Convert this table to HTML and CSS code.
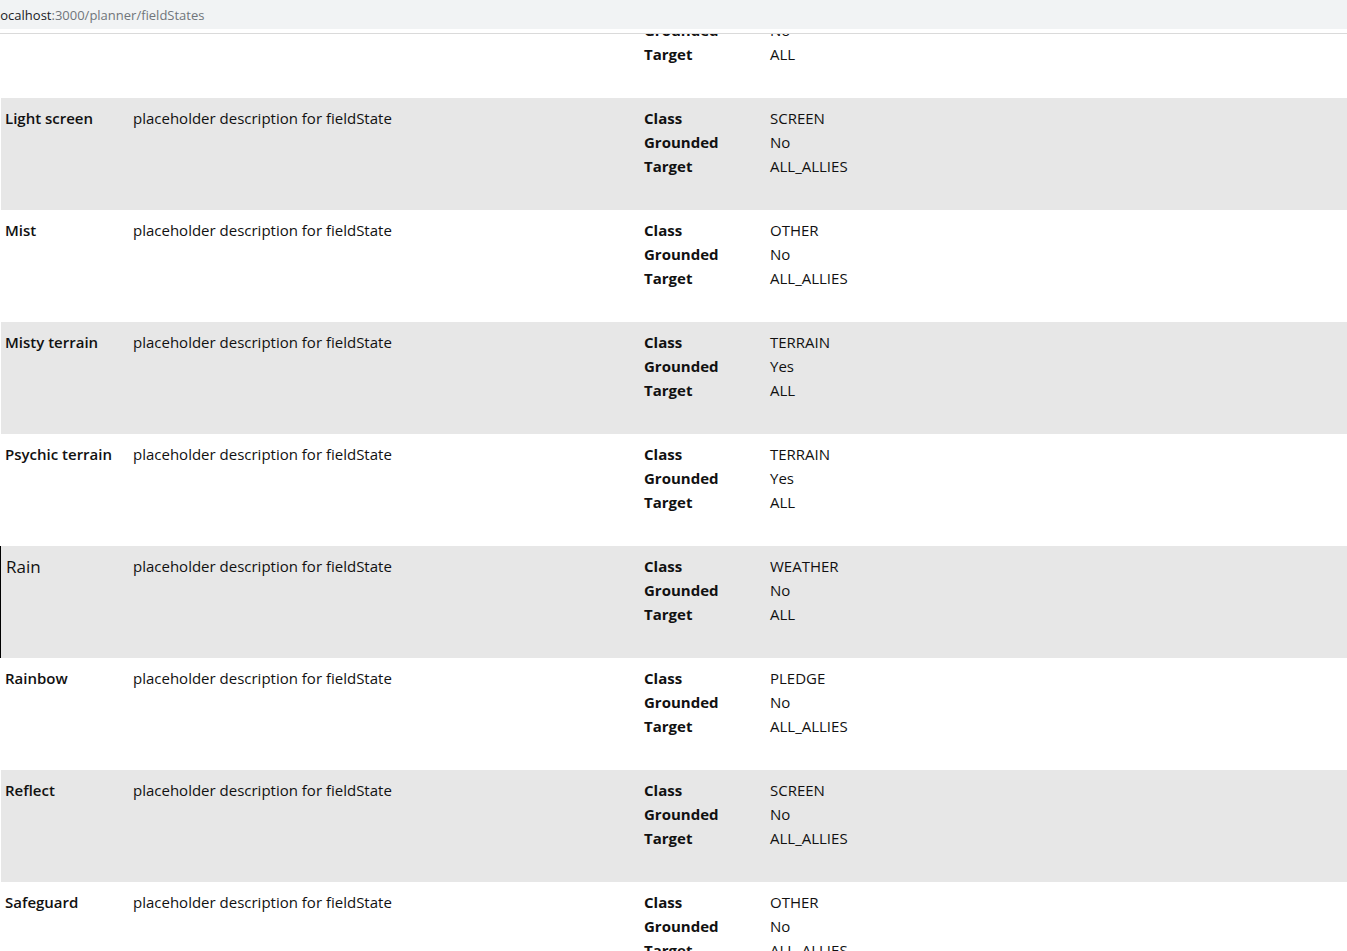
FILE: index.html
```html
<!DOCTYPE html>
<html lang="en">
<head>
<meta charset="utf-8">
<title>fieldStates</title>
<link rel="stylesheet" href="styles.css">
</head>
<body>
<div class="urlbar"><span class="url"><span class="host">localhost</span>:3000/planner/fieldStates</span></div>
<div class="viewport">
<div class="list">
  <div class="row">
    <div class="name">Hail</div>
    <div class="desc">placeholder description for fieldState</div>
    <div class="props"><span class="k">Class</span><span class="v">WEATHER</span><span class="k">Grounded</span><span class="v">No</span><span class="k">Target</span><span class="v">ALL</span></div>
  </div>
  <div class="row alt">
    <div class="name">Light screen</div>
    <div class="desc">placeholder description for fieldState</div>
    <div class="props"><span class="k">Class</span><span class="v">SCREEN</span><span class="k">Grounded</span><span class="v">No</span><span class="k">Target</span><span class="v">ALL_ALLIES</span></div>
  </div>
  <div class="row">
    <div class="name">Mist</div>
    <div class="desc">placeholder description for fieldState</div>
    <div class="props"><span class="k">Class</span><span class="v">OTHER</span><span class="k">Grounded</span><span class="v">No</span><span class="k">Target</span><span class="v">ALL_ALLIES</span></div>
  </div>
  <div class="row alt">
    <div class="name">Misty terrain</div>
    <div class="desc">placeholder description for fieldState</div>
    <div class="props"><span class="k">Class</span><span class="v">TERRAIN</span><span class="k">Grounded</span><span class="v">Yes</span><span class="k">Target</span><span class="v">ALL</span></div>
  </div>
  <div class="row">
    <div class="name">Psychic terrain</div>
    <div class="desc">placeholder description for fieldState</div>
    <div class="props"><span class="k">Class</span><span class="v">TERRAIN</span><span class="k">Grounded</span><span class="v">Yes</span><span class="k">Target</span><span class="v">ALL</span></div>
  </div>
  <div class="row alt active">
    <div class="name">Rain</div>
    <div class="desc">placeholder description for fieldState</div>
    <div class="props"><span class="k">Class</span><span class="v">WEATHER</span><span class="k">Grounded</span><span class="v">No</span><span class="k">Target</span><span class="v">ALL</span></div>
  </div>
  <div class="row">
    <div class="name">Rainbow</div>
    <div class="desc">placeholder description for fieldState</div>
    <div class="props"><span class="k">Class</span><span class="v">PLEDGE</span><span class="k">Grounded</span><span class="v">No</span><span class="k">Target</span><span class="v">ALL_ALLIES</span></div>
  </div>
  <div class="row alt">
    <div class="name">Reflect</div>
    <div class="desc">placeholder description for fieldState</div>
    <div class="props"><span class="k">Class</span><span class="v">SCREEN</span><span class="k">Grounded</span><span class="v">No</span><span class="k">Target</span><span class="v">ALL_ALLIES</span></div>
  </div>
  <div class="row">
    <div class="name">Safeguard</div>
    <div class="desc">placeholder description for fieldState</div>
    <div class="props"><span class="k">Class</span><span class="v">OTHER</span><span class="k">Grounded</span><span class="v">No</span><span class="k">Target</span><span class="v">ALL_ALLIES</span></div>
  </div>
</div>
</div>
</body>
</html>
```

FILE: styles.css
```css
html, body {
  margin: 0;
  padding: 0;
  background: #fff;
  overflow: hidden;
}
body {
  font-family: "Open Sans", "Noto Sans", "Liberation Sans", sans-serif;
  font-size: 15px;
  color: #111;
  height: 951px;
  display: flex;
  flex-direction: column;
}
.urlbar {
  flex: none;
  height: 34px;
  background: #fff;
  border-bottom: 1px solid #dadada;
  box-sizing: border-box;
  overflow: hidden;
}
.url {
  display: block;
  height: 29px;
  background: #f1f3f4;
  line-height: 30px;
  font-size: 13px;
  color: #70757a;
  margin-left: -3px;
  white-space: nowrap;
}
.host {
  color: #202124;
}
.viewport {
  flex: 1;
  overflow: hidden;
}
.list {
  margin-top: -48px;
}
.row {
  display: grid;
  grid-template-columns: 128px 511px 126px;
  height: 112px;
  box-sizing: border-box;
  padding-top: 8px;
  border-left: 1px solid #fff;
  line-height: 24px;
}
.row.alt {
  background: #e7e7e7;
}
.row > div {
  padding-left: 4px;
}
.name {
  font-weight: 600;
}
.props {
  display: grid;
  grid-template-columns: 126px auto;
  grid-column: 3 / 5;
  align-content: start;
}
.k {
  font-weight: 700;
}
.row.active {
  border-left-color: #000;
}
.row.active .name {
  font-weight: 400;
  font-size: 17px;
  padding-left: 5px;
  padding-top: 1px;
  line-height: 23px;
}
```
